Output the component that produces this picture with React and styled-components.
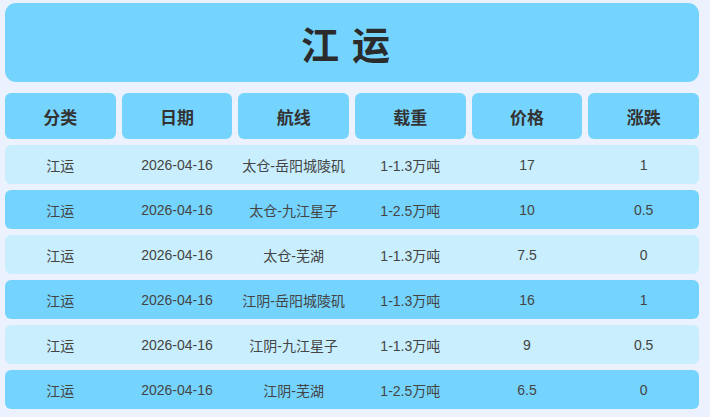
import React from 'react';
import styled, { createGlobalStyle } from 'styled-components';

const GlobalStyle = createGlobalStyle`
  html, body {
    margin: 0;
    padding: 0;
    background: #ebf2fd;
    font-family: "Liberation Sans", "Noto Sans CJK SC", sans-serif;
  }
`;

const Page = styled.div`
  width: 694px;
  padding: 3px 0 0 5px;
`;

const TitleBox = styled.div`
  height: 79px;
  background: #75d4fe;
  border-radius: 11px;
  display: flex;
  align-items: center;
  justify-content: center;
`;

const Title = styled.h1`
  margin: 0;
  font-size: 38px;
  font-weight: 700;
  letter-spacing: 13px;
  color: #2b2b2b;
`;

const HeaderRow = styled.div`
  display: grid;
  grid-template-columns: repeat(6, 1fr);
  column-gap: 6px;
  margin-top: 11px;
`;

const HeaderCell = styled.div`
  height: 46px;
  background: #75d4fe;
  border-radius: 6px;
  display: flex;
  align-items: center;
  justify-content: center;
  font-size: 17px;
  font-weight: 700;
  color: #333;
`;

const Rows = styled.div`
  display: flex;
  flex-direction: column;
  gap: 6px;
  margin-top: 6px;
`;

const Row = styled.div`
  height: 39px;
  border-radius: 6px;
  background: ${(p) => (p.$dark ? '#75d4fe' : '#c9eefd')};
  display: grid;
  grid-template-columns: repeat(6, 1fr);
  column-gap: 6px;
  align-items: center;
`;

const Cell = styled.div`
  text-align: center;
  font-size: 14px;
  color: #444;
`;

const headers = ['分类', '日期', '航线', '载重', '价格', '涨跌'];

const data = [
  ['江运', '2026-04-16', '太仓-岳阳城陵矶', '1-1.3万吨', '17', '1'],
  ['江运', '2026-04-16', '太仓-九江星子', '1-2.5万吨', '10', '0.5'],
  ['江运', '2026-04-16', '太仓-芜湖', '1-1.3万吨', '7.5', '0'],
  ['江运', '2026-04-16', '江阴-岳阳城陵矶', '1-1.3万吨', '16', '1'],
  ['江运', '2026-04-16', '江阴-九江星子', '1-1.3万吨', '9', '0.5'],
  ['江运', '2026-04-16', '江阴-芜湖', '1-2.5万吨', '6.5', '0'],
];

const App = () => {
  return (
    <>
      <GlobalStyle />
      <Page>
        <TitleBox>
          <Title>江运</Title>
        </TitleBox>
        <HeaderRow>
          {headers.map((h) => (
            <HeaderCell key={h}>{h}</HeaderCell>
          ))}
        </HeaderRow>
        <Rows>
          {data.map((row, i) => (
            <Row key={i} $dark={i % 2 === 1}>
              {row.map((v, j) => (
                <Cell key={j}>{v}</Cell>
              ))}
            </Row>
          ))}
        </Rows>
      </Page>
    </>
  );
};

export default App;
